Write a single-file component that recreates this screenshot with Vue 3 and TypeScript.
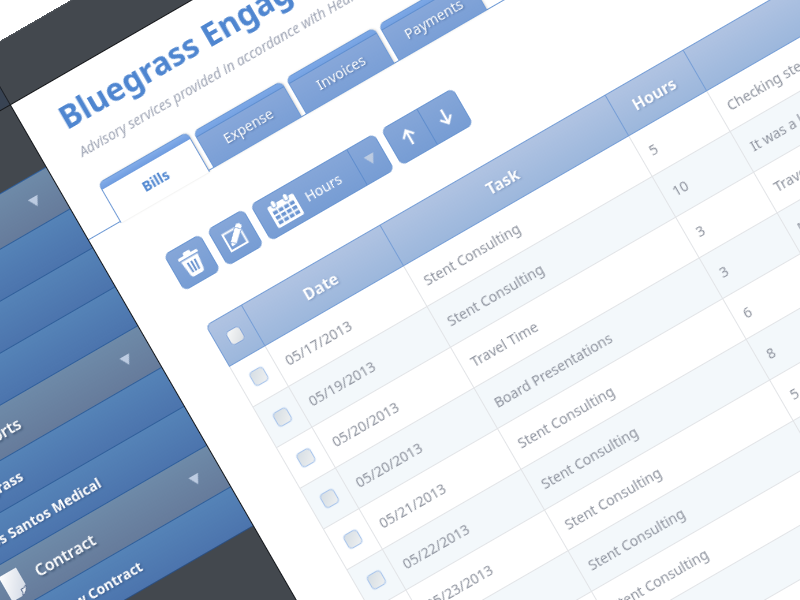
<script setup lang="ts">
import { ref } from 'vue'

interface MenuSection {
  title: string
  items: string[]
}

interface BillRow {
  date: string
  task: string
  hours: number
  note: string
}

const sections: MenuSection[] = [
  { title: 'Clients', items: ['Active', 'Pending', 'Archive'] },
  { title: 'Reports', items: ['Bluegrass', 'Los Santos Medical'] },
  { title: 'Contract', items: ['Add New Contract'] },
]

const tabs: string[] = ['Bills', 'Expense', 'Invoices', 'Payments']
const activeTab = ref<string>('Bills')

const rows: BillRow[] = [
  { date: '05/17/2013', task: 'Stent Consulting', hours: 5, note: 'Checking stent inventory' },
  { date: '05/19/2013', task: 'Stent Consulting', hours: 10, note: 'It was a long meeting' },
  { date: '05/20/2013', task: 'Travel Time', hours: 3, note: 'Travel to hospital' },
  { date: '05/20/2013', task: 'Board Presentations', hours: 3, note: 'Meeting with the board' },
  { date: '05/21/2013', task: 'Stent Consulting', hours: 6, note: 'Checking results' },
  { date: '05/22/2013', task: 'Stent Consulting', hours: 8, note: 'Checking results' },
  { date: '05/23/2013', task: 'Stent Consulting', hours: 5, note: 'Checking results' },
  { date: '05/24/2013', task: 'Stent Consulting', hours: 4, note: 'Checking results' },
  { date: '05/25/2013', task: 'Stent Consulting', hours: 6, note: 'Checking results' },
  { date: '05/26/2013', task: 'Travel Time', hours: 2, note: 'Travel home' },
  { date: '05/27/2013', task: 'Travel Time', hours: 2, note: 'Travel home' },
]

const holeColumns: number[] = [0, 1, 2, 3]
const holeRows: number[] = [0, 1, 2]
</script>

<template>
  <div class="stage">
    <div class="app">
      <header class="topbar">
        <div class="brand"></div>
      </header>
      <div class="body">
        <nav class="sidebar" aria-label="Main">
          <section v-for="section in sections" :key="section.title">
            <button class="section-head" type="button">
              <svg class="page-icon" viewBox="0 0 20 28" aria-hidden="true">
                <defs>
                  <linearGradient id="page-fill" x1="0" y1="0" x2="1" y2="1">
                    <stop offset="0" stop-color="#ffffff" />
                    <stop offset="1" stop-color="#cdd5e2" />
                  </linearGradient>
                </defs>
                <path d="M0 0H20V20Q17 27 12 28H0Z" fill="url(#page-fill)" />
                <path d="M20 20Q16 22.500 13.500 21.500Q14.500 25 12 28Q18 26.500 20 20Z" fill="#f4f6fa" stroke="#53678a" stroke-width="1" />
              </svg>
              <span class="section-title">{{ section.title }}</span>
              <svg class="caret" viewBox="0 0 11 10" aria-hidden="true"><path d="M0 0H11L5.500 10Z" /></svg>
            </button>
            <a v-for="item in section.items" :key="item" class="item" href="#">{{ item }}</a>
          </section>
        </nav>

        <main class="panel">
          <h1>Bluegrass Engagement</h1>
          <p class="subtitle">Advisory services provided in accordance with Health Care</p>

          <div class="tabs" role="tablist">
            <button
              v-for="tab in tabs"
              :key="tab"
              class="tab"
              :class="{ active: tab === activeTab }"
              type="button"
              role="tab"
              :aria-selected="tab === activeTab"
              @click="activeTab = tab"
            >
              {{ tab }}
            </button>
          </div>

          <div class="toolbar">
            <div class="group">
              <button class="square" type="button" aria-label="Delete">
                <svg width="26" height="28" viewBox="0 0 26 28" aria-hidden="true">
                  <path d="M9 4V2.500Q9 1 10.500 1H15.500Q17 1 17 2.500V4H22.500Q24 4 24 5.500V7H2V5.500Q2 4 3.500 4Z" fill="#fff" />
                  <path d="M3.500 8.500H22.500L20.500 24Q20 27 17.500 27H8.500Q6 27 5.500 24Z" fill="#fff" />
                  <path d="M9 12L9.600 23M13 12V23M17 12L16.400 23" stroke="#5f8ccc" stroke-width="1.800" />
                </svg>
              </button>
            </div>
            <div class="group">
              <button class="square" type="button" aria-label="Edit">
                <svg width="28" height="28" viewBox="0 0 28 28" aria-hidden="true">
                  <path d="M4 5.500H22.500V24H4Z" fill="none" stroke="#fff" stroke-width="2" />
                  <path d="M5.500 21.500L7.500 15.500L20.500 2.500Q22 1 24 2.500L25.500 4Q27 6 25.500 7.500L12.500 20Z" fill="#fff" stroke="#6f98d4" stroke-width="1" />
                  <path d="M18.500 4.500L23.500 9.500M7.500 15.500L12.500 20" stroke="#7da2d8" stroke-width="1" />
                  <path d="M5.500 21.500L6.300 19L8.200 20.700Z" fill="#6f98d4" />
                </svg>
              </button>
            </div>
            <div class="group">
              <button class="main" type="button">
                <svg width="30" height="30" viewBox="0 0 30 30" aria-hidden="true">
                  <path d="M2 5H28Q30 5 30 7V27Q30 29 28 29H2Q0 29 0 27V7Q0 5 2 5Z" fill="#fff" />
                  <rect x="5" y="1" width="5" height="8" rx="2.500" fill="#fff" stroke="#7099d3" stroke-width="1" />
                  <rect x="19" y="1" width="5" height="8" rx="2.500" fill="#fff" stroke="#7099d3" stroke-width="1" />
                  <template v-for="r in holeRows" :key="r">
                    <rect
                      v-for="c in holeColumns"
                      :key="c"
                      :x="3 + c * 6.4"
                      :y="11.500 + r * 5.500"
                      width="4.800"
                      height="3.600"
                      fill="#6b95d1"
                    />
                  </template>
                </svg>
                <span>Hours</span>
              </button>
              <button class="drop" type="button" aria-label="More">
                <svg class="caret" viewBox="0 0 11 10" aria-hidden="true"><path d="M0 0H11L5.500 10Z" /></svg>
              </button>
            </div>
            <div class="group">
              <button class="square" type="button" aria-label="Move up">
                <svg width="18" height="20" viewBox="0 0 18 20" aria-hidden="true">
                  <path d="M9 18V3M3 9L9 2.500L15 9" fill="none" stroke="#fff" stroke-width="2.400" />
                </svg>
              </button>
              <button class="square split" type="button" aria-label="Move down">
                <svg width="18" height="20" viewBox="0 0 18 20" aria-hidden="true">
                  <path d="M9 2V17M3 11L9 17.500L15 11" fill="none" stroke="#fff" stroke-width="2.400" />
                </svg>
              </button>
            </div>
          </div>

          <table class="bills">
            <colgroup>
              <col class="c-check" />
              <col class="c-date" />
              <col class="c-task" />
              <col class="c-hours" />
              <col />
            </colgroup>
            <thead>
              <tr>
                <th class="check"><input type="checkbox" aria-label="Select all" /></th>
                <th>Date</th>
                <th>Task</th>
                <th>Hours</th>
                <th>Notes</th>
              </tr>
            </thead>
            <tbody>
              <tr v-for="(row, i) in rows" :key="i">
                <td class="check"><input type="checkbox" :aria-label="'Select ' + row.date" /></td>
                <td>{{ row.date }}</td>
                <td>{{ row.task }}</td>
                <td>{{ row.hours }}</td>
                <td>{{ row.note }}</td>
              </tr>
            </tbody>
          </table>
        </main>
      </div>
    </div>
  </div>
</template>

<style>
body {
  margin: 0;
  background: #fff;
}
</style>

<style scoped>
.stage {
  height: 100vh;
  overflow: hidden;
  font-family: 'Noto Sans', 'Open Sans', sans-serif;
  font-size: 14px;
}
.app {
  display: flex;
  flex-direction: column;
  width: 150vw;
  min-height: 160vh;
  transform: translate(11px, 105px) rotate(-30deg) translate(-270px, -61px);
  transform-origin: 0 0;
  will-change: transform;
}
button {
  margin: 0;
  padding: 0;
  border: 0;
  background: none;
  font: inherit;
  color: inherit;
  cursor: pointer;
}
svg {
  display: block;
}
.topbar {
  box-sizing: border-box;
  height: 61px;
  background: #43484e;
  border-top: 1px solid #53585e;
  border-bottom: 1px solid #15171a;
}
.brand {
  box-sizing: border-box;
  width: 270px;
  height: 100%;
  background: #384353;
  border-right: 1px solid #1c2026;
}
.body {
  flex: 1;
  display: flex;
}
.sidebar {
  box-sizing: border-box;
  flex: none;
  width: 270px;
  padding-top: 71px;
  background: #43484e;
  border-right: 1px solid #14171b;
}
.section-head {
  box-sizing: border-box;
  display: flex;
  align-items: center;
  width: 100%;
  height: 48px;
  padding: 0 21px 0 23px;
  background: linear-gradient(#6e8aa8, #667b9b);
  border-top: 1px solid #2f5f9c;
  color: #fff;
  text-align: left;
}
.page-icon {
  width: 20px;
  height: 28px;
  margin-right: 15px;
}
.section-title {
  flex: 1;
  font-size: 16px;
  font-weight: 600;
  text-shadow: 1px 2px 2px rgba(30, 50, 80, 0.5);
}
.caret {
  width: 11px;
  height: 10px;
  fill: #bccbe1;
}
.item {
  box-sizing: border-box;
  display: flex;
  align-items: center;
  height: 45px;
  padding-left: 26px;
  background: linear-gradient(#5583b7, #4c74ad);
  border-top: 1px solid #305f9a;
  color: #fff;
  font-weight: 700;
  text-decoration: none;
  text-shadow: 1px 1px 2px rgba(25, 50, 95, 0.5);
}
.sidebar section:last-child .item:last-child {
  height: 46px;
  border-bottom: 1px solid #2c4f80;
}
.panel {
  flex: 1;
  background: #fff;
  padding-top: 18px;
}
h1 {
  margin: 0 0 8px;
  padding-left: 36px;
  color: #4f86d0;
  font-size: 32px;
  font-weight: 700;
  line-height: 40px;
}
.subtitle {
  margin: 0 0 25px;
  padding-left: 36px;
  color: #a1a7b6;
  font-size: 14px;
  font-style: italic;
  line-height: 20px;
}
.tabs {
  display: flex;
  align-items: flex-end;
  gap: 5px;
  height: 45px;
  padding-left: 36px;
  box-shadow: inset 0 -1px 0 #6c98d4;
}
.tab {
  box-sizing: border-box;
  width: 102px;
  height: 42px;
  padding-top: 2px;
  border: 1px solid #6f9ad6;
  border-radius: 6px 6px 0 0;
  background: linear-gradient(#7ca8e6 0, #76a2e2 5px, #5f8fd0 5px, #5f8fd0 6px, #87a7d9 6px, #7a9fd6);
  color: #fff;
  text-shadow: 1px 1px 2px rgba(40, 75, 130, 0.6);
  box-shadow: 1px 0 2px rgba(120, 110, 100, 0.25);
}
.tab.active {
  width: 103px;
  height: 46px;
  margin-bottom: -1px;
  padding-top: 5px;
  border-bottom: 0;
  background: linear-gradient(#82ace9 0, #6f9cdf 7px, #fff 7px);
  color: #4f86d0;
  font-weight: 700;
  text-shadow: none;
}
.toolbar {
  display: flex;
  gap: 8px;
  margin: 50px 0 40px;
  padding-left: 57px;
}
.group {
  box-sizing: border-box;
  display: flex;
  height: 42px;
  border: 1px solid #6b96d2;
  border-radius: 6px;
  background: linear-gradient(#85a6d8, #779dd4);
  color: #fff;
}
.square {
  display: flex;
  align-items: center;
  justify-content: center;
  width: 40px;
}
.split {
  box-sizing: border-box;
  width: 41px;
  border-left: 1px solid #5f8dcd;
}
.main {
  display: flex;
  align-items: center;
  gap: 9px;
  width: 110px;
  padding-left: 12px;
}
.drop {
  box-sizing: border-box;
  display: flex;
  align-items: center;
  justify-content: center;
  width: 31px;
  border-left: 1px solid #5f8dcd;
}
.bills {
  width: calc(100% - 58px);
  margin-left: 58px;
  border-collapse: separate;
  border-spacing: 0;
  table-layout: fixed;
  color: #8f949f;
}
.c-check {
  width: 41px;
}
.c-date {
  width: 160px;
}
.c-task {
  width: 260px;
}
.c-hours {
  width: 90px;
}
th {
  box-sizing: border-box;
  height: 48px;
  padding: 0 4px 0 0;
  background: linear-gradient(#b0c3e2, #9cb7dc);
  border: 1px solid #769ed6;
  border-right: 0;
  color: #fff;
  font-size: 16px;
  font-weight: 700;
  text-shadow: 1px 1px 2px rgba(80, 110, 160, 0.5);
}
th:first-child {
  border-top-left-radius: 6px;
}
td {
  box-sizing: border-box;
  height: 47px;
  padding: 0 0 0 10px;
  border-left: 1px solid #e2e4e7;
  border-bottom: 1px solid #e2e4e7;
}
tbody tr:nth-child(even) {
  background: #f3f8fb;
}
.check {
  padding: 0;
  text-align: center;
}
.check input {
  appearance: none;
  box-sizing: border-box;
  display: block;
  width: 16px;
  height: 16px;
  margin: 0 auto;
  border: 1px solid #a9c5ec;
  border-radius: 4px;
  background: linear-gradient(135deg, #d5dde3, #eef0f1);
  box-shadow: 0 0 1px #b9d0f0;
}
th.check input {
  border-color: #8aa8d8;
  background: linear-gradient(135deg, #f8f9f9, #d9dde1);
}
</style>
